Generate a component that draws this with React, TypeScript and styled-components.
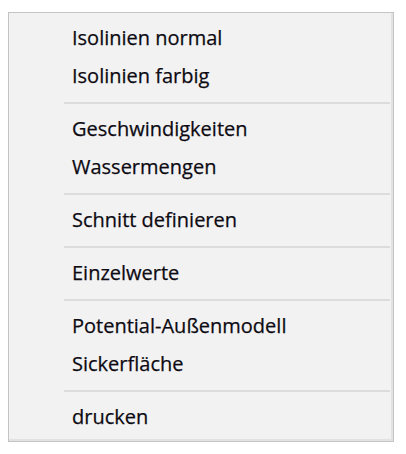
import React from 'react'
import styled, { createGlobalStyle } from 'styled-components'

const GlobalStyle = createGlobalStyle`
  html, body {
    margin: 0;
    padding: 0;
    background: #fff;
  }
`

const Page = styled.div`
  width: 406px;
  height: 454px;
  padding: 12px 0 0 8px;
  box-sizing: border-box;
`

const Menu = styled.ul`
  list-style: none;
  margin: 0;
  width: 386px;
  box-sizing: border-box;
  padding: 6px 3px 5px 2px;
  background: #f2f2f2;
  border: 1px solid #c4c4c4;
  box-shadow: inset -2px -2px 0 #e2e2e2;
  font-family: 'Open Sans', 'Noto Sans', sans-serif;
  font-size: 20px;
  font-weight: 400;
  color: #0d0a12;
  -webkit-text-stroke: 0.25px #0d0a12;
`

const Item = styled.li`
  height: 38px;
  box-sizing: border-box;
  display: flex;
  align-items: center;
  padding: 0 0 2px 61px;
  cursor: default;
  white-space: nowrap;
`

const Separator = styled.li`
  height: 15px;
  display: flex;
  align-items: center;
  padding-left: 53px;

  &::after {
    content: '';
    flex: 1;
    height: 2px;
    background: #dcdcdc;
  }
`

type Entry = string | null

const entries: Entry[] = [
  'Isolinien normal',
  'Isolinien farbig',
  null,
  'Geschwindigkeiten',
  'Wassermengen',
  null,
  'Schnitt definieren',
  null,
  'Einzelwerte',
  null,
  'Potential-Außenmodell',
  'Sickerfläche',
  null,
  'drucken',
]

const App = () => (
  <>
    <GlobalStyle />
    <Page>
      <Menu>
        {entries.map((e, i) => (e === null ? <Separator key={i} /> : <Item key={i}>{e}</Item>))}
      </Menu>
    </Page>
  </>
)

export default App
